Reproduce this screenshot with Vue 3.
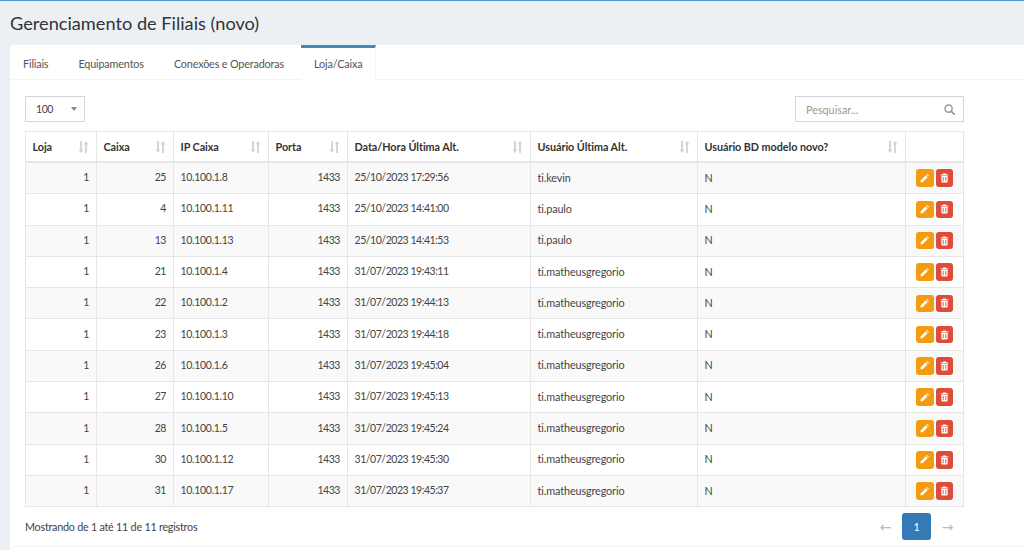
<template>
  <div class="page">
    <h1 class="title">Gerenciamento de Filiais (novo)</h1>
    <div class="card">
      <ul class="tabs">
        <li v-for="tab in tabs" :key="tab" class="tab" :class="{ active: tab === 'Loja/Caixa' }">{{ tab }}</li>
      </ul>
      <div class="content">
        <div class="toolbar">
          <div class="select">
            <span class="digits">100</span>
            <i class="caret"></i>
          </div>
          <div class="search">
            <span>Pesquisar...</span>
            <svg width="11" height="11" viewBox="0 0 12 12" fill="none" stroke="#999" stroke-width="1.6">
              <circle cx="5" cy="5" r="3.9" />
              <path d="M8 8l3.300 3.300" stroke-linecap="round" stroke-width="2" />
            </svg>
          </div>
        </div>
        <table class="grid">
          <colgroup>
            <col v-for="col in columns" :key="col.label" :style="{ width: col.width + 'px' }" />
            <col class="col-actions" />
          </colgroup>
          <thead>
            <tr>
              <th v-for="col in columns" :key="col.label">
                <div class="head-cell">
                  <span>{{ col.label }}</span>
                  <svg class="sort" width="11" height="12" viewBox="0 0 11 12" fill="#d6d6d6">
                    <path d="M2 0h2v8.500h1.600L3 12 .4 8.500H2z" />
                    <path d="M8 0l2.600 3.500H9V12H7V3.500H5.400z" />
                  </svg>
                </div>
              </th>
              <th></th>
            </tr>
          </thead>
          <tbody>
            <tr v-for="row in rows" :key="row.caixa">
              <td class="num digits">1</td>
              <td class="num digits">{{ row.caixa }}</td>
              <td class="ip">{{ row.ip }}</td>
              <td class="num digits">1433</td>
              <td class="digits">{{ row.data }}</td>
              <td class="user">{{ row.user }}</td>
              <td>N</td>
              <td class="actions">
                <button class="btn edit">
                  <svg width="9" height="9" viewBox="0 0 10 10" fill="#fff">
                    <path d="M0.500 9.500l.5-2.600L6.400 1.500l2.100 2.100L3.100 9z" />
                    <path d="M7.100.8l.4-.3a.8.800 0 0 1 1.100 0l.9.900a.8.800 0 0 1 0 1.100l-.3.4z" />
                  </svg>
                </button>
                <button class="btn del">
                  <svg width="9" height="10" viewBox="0 0 10 10" fill="#fff">
                    <path d="M3.500 0h3l.5 1.200h2.200v1H.800v-1H3z" />
                    <path d="M1.500 2.900h7V9a1 1 0 0 1-1 1h-5a1 1 0 0 1-1-1zM3 4v4.500h1V4zm3 0v4.500h1V4z" fill-rule="evenodd" />
                  </svg>
                </button>
              </td>
            </tr>
          </tbody>
        </table>
        <div class="footer">
          <span>Mostrando de 1 até 11 de 11 registros</span>
          <div class="pager">
            <span class="arrow">←</span>
            <span class="page-btn">1</span>
            <span class="arrow">→</span>
          </div>
        </div>
      </div>
      <div class="card-line"></div>
    </div>
  </div>
</template>

<script setup>
const tabs = ['Filiais', 'Equipamentos', 'Conexões e Operadoras', 'Loja/Caixa']

const columns = [
  { label: 'Loja', width: 71 },
  { label: 'Caixa', width: 77 },
  { label: 'IP Caixa', width: 95 },
  { label: 'Porta', width: 79 },
  { label: 'Data/Hora Última Alt.', width: 183 },
  { label: 'Usuário Última Alt.', width: 167 },
  { label: 'Usuário BD modelo novo?', width: 208 }
]

const rows = [
  { caixa: 25, ip: '10.100.1.8', data: '25/10/2023 17:29:56', user: 'ti.kevin' },
  { caixa: 4, ip: '10.100.1.11', data: '25/10/2023 14:41:00', user: 'ti.paulo' },
  { caixa: 13, ip: '10.100.1.13', data: '25/10/2023 14:41:53', user: 'ti.paulo' },
  { caixa: 21, ip: '10.100.1.4', data: '31/07/2023 19:43:11', user: 'ti.matheusgregorio' },
  { caixa: 22, ip: '10.100.1.2', data: '31/07/2023 19:44:13', user: 'ti.matheusgregorio' },
  { caixa: 23, ip: '10.100.1.3', data: '31/07/2023 19:44:18', user: 'ti.matheusgregorio' },
  { caixa: 26, ip: '10.100.1.6', data: '31/07/2023 19:45:04', user: 'ti.matheusgregorio' },
  { caixa: 27, ip: '10.100.1.10', data: '31/07/2023 19:45:13', user: 'ti.matheusgregorio' },
  { caixa: 28, ip: '10.100.1.5', data: '31/07/2023 19:45:24', user: 'ti.matheusgregorio' },
  { caixa: 30, ip: '10.100.1.12', data: '31/07/2023 19:45:30', user: 'ti.matheusgregorio' },
  { caixa: 31, ip: '10.100.1.17', data: '31/07/2023 19:45:37', user: 'ti.matheusgregorio' }
]
</script>

<style>
html, body {
  margin: 0;
  overflow: hidden;
}
</style>

<style scoped>
.page {
  height: 550px;
  box-sizing: border-box;
  overflow: hidden;
  background: #ecf0f5;
  border-top: 1px solid #4b9ccf;
  padding-left: 10px;
  font-family: "Lato", "Liberation Sans", sans-serif;
  font-size: 10.8px;
  letter-spacing: -0.25px;
  color: #444;
}
.title {
  margin: 0;
  height: 44px;
  line-height: 44px;
  font-size: 18.2px;
  font-weight: 400;
  letter-spacing: 0;
  color: #333;
}
.card {
  background: #fff;
  height: 505px;
  border-top-left-radius: 3px;
}
.tabs {
  display: flex;
  margin: 0;
  padding: 0;
  list-style: none;
  height: 35px;
  box-sizing: border-box;
  border-bottom: 1px solid #f4f4f4;
}
.tab {
  padding: 0 13px;
  margin-right: 4px;
  line-height: 38px;
  letter-spacing: -0.15px;
  color: #555;
  height: 35px;
  box-sizing: border-box;
}
.tab.active {
  border-top: 3px solid #3c8dbc;
  border-right: 1px solid #f4f4f4;
  line-height: 32px;
  background: #fff;
}
.content {
  width: 939px;
  padding: 16px 0 0 15px;
}
.toolbar {
  display: flex;
  justify-content: space-between;
  height: 26px;
  margin-bottom: 9px;
}
.select {
  width: 60px;
  box-sizing: border-box;
  border: 1px solid #d2d6de;
  display: flex;
  align-items: center;
  justify-content: space-between;
  padding: 0 7px 0 10px;
}
.caret {
  width: 0;
  height: 0;
  border-left: 3px solid transparent;
  border-right: 3px solid transparent;
  border-top: 4px solid #888;
}
.search {
  width: 169px;
  box-sizing: border-box;
  border: 1px solid #d2d6de;
  display: flex;
  align-items: center;
  justify-content: space-between;
  padding: 0 8px 0 10px;
  color: #999;
  letter-spacing: 0;
}
.grid {
  width: 938px;
  table-layout: fixed;
  border-collapse: collapse;
  border: 1px solid #e6e6e6;
}
.col-actions {
  width: 58px;
}
.grid th,
.grid td {
  border: 1px solid #e6e6e6;
  padding: 0 7px 0 6.500px;
  text-align: left;
  overflow: hidden;
  white-space: nowrap;
}
.grid th {
  height: 29px;
  border-bottom-width: 2px;
  font-weight: 700;
  letter-spacing: -0.05px;
  color: #333;
}
.grid td {
  height: 28.3px;
  padding-bottom: 2px;
}
.grid tbody tr:nth-child(odd) {
  background: #f9f9f9;
}
.grid td.num {
  text-align: right;
}
.digits {
  font-size: 10.5px;
  letter-spacing: -0.45px;
}
.grid td.ip {
  font-size: 10.5px;
  letter-spacing: -0.3px;
}
.grid td.user {
  letter-spacing: -0.1px;
}
.head-cell {
  display: flex;
  align-items: center;
  justify-content: space-between;
}
.grid td.actions {
  text-align: center;
  height: 30.3px;
  padding: 0;
}
.btn {
  display: inline-flex;
  align-items: center;
  justify-content: center;
  width: 17px;
  height: 17.500px;
  margin: 0 1.200px;
  padding: 0;
  border: 0;
  border-radius: 3px;
  vertical-align: middle;
}
.edit {
  background: #f39c12;
  width: 18px;
}
.del {
  background: #dd4b39;
}
.footer {
  display: flex;
  justify-content: space-between;
  align-items: center;
  height: 39px;
}
.pager {
  display: flex;
  align-items: center;
  margin-right: 8px;
}
.arrow {
  width: 17px;
  text-align: center;
  color: #bbb;
  font-size: 14px;
  font-family: "DejaVu Sans", sans-serif;
}
.page-btn {
  width: 29px;
  height: 27px;
  line-height: 27px;
  margin: 0 8px;
  text-align: center;
  background: #337ab7;
  border-radius: 3px;
  color: #fff;
}
.card-line {
  height: 1px;
  margin-left: 3px;
  background: #f4f4f4;
}
</style>
